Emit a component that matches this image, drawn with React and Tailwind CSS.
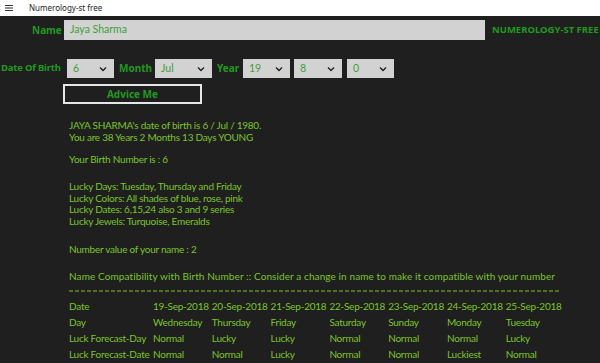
import React from "react";

function Chevron() {
  return (
    <svg width="8" height="6" viewBox="0 0 8 6" className="shrink-0">
      <polyline points="1,1.5 4,4.5 7,1.5" fill="none" stroke="#222" strokeWidth="1.4" />
    </svg>
  );
}

function Select({ value, w }) {
  return (
    <div className={`flex h-[19px] items-center justify-between bg-[#d2d2d2] pl-[6px] pr-[7px] font-['Lato',sans-serif] text-[10.5px] text-[#3c9f3c] ${w}`}>
      <span>{value}</span>
      <Chevron />
    </div>
  );
}

const dates = ["19-Sep-2018", "20-Sep-2018", "21-Sep-2018", "22-Sep-2018", "23-Sep-2018", "24-Sep-2018", "25-Sep-2018"];
const rows = [
  ["Date", ...dates],
  ["Day", "Wednesday", "Thursday", "Friday", "Saturday", "Sunday", "Monday", "Tuesday"],
  ["Luck Forecast-Day", "Normal", "Lucky", "Lucky", "Normal", "Normal", "Normal", "Lucky"],
  ["Luck Forecast-Date", "Normal", "Normal", "Lucky", "Normal", "Normal", "Luckiest", "Normal"],
];

export default function App() {
  return (
    <div className="h-[363px] w-[600px] overflow-hidden bg-[#1f1f1f] font-['Noto_Sans',sans-serif]">
      <div className="flex h-[16px] items-center bg-white">
        <svg width="8" height="6" viewBox="0 0 8 6" className="ml-[5px]">
          <rect x="0" y="0" width="8" height="1" fill="#333" />
          <rect x="0" y="2.5" width="8" height="1" fill="#333" />
          <rect x="0" y="5" width="8" height="1" fill="#333" />
        </svg>
        <span className="ml-[16px] text-[8px] text-[#222]">Numerology-st free</span>
      </div>

      <div className="mt-[4px] flex h-[20px] items-center">
        <span className="ml-[32px] w-[32px] text-[10px] font-bold text-[#1f9a1f]">Name</span>
        <div className="flex h-[20px] w-[421px] items-center bg-[#d2d2d2] pl-[6px] font-['Lato',sans-serif] text-[10.5px] text-[#3c9f3c]">Jaya Sharma</div>
        <span className="ml-[7px] whitespace-nowrap text-[9.5px] font-bold text-[#1f9a1f]">NUMEROLOGY-ST FREE</span>
      </div>

      <div className="mt-[19px] flex h-[19px] items-center">
        <span className="w-[67px] whitespace-nowrap pl-[1px] text-[9.5px] font-bold tracking-[-0.2px] text-[#1f9a1f]">Date Of Birth</span>
        <Select value="6" w="w-[47px]" />
        <span className="ml-[5px] w-[36px] text-[10px] font-bold text-[#1f9a1f]">Month</span>
        <Select value="Jul" w="w-[57px]" />
        <span className="ml-[5px] w-[26px] text-[10px] font-bold text-[#1f9a1f]">Year</span>
        <Select value="19" w="w-[47px]" />
        <div className="w-[4px]" />
        <Select value="8" w="w-[48px]" />
        <div className="w-[5px]" />
        <Select value="0" w="w-[47px]" />
      </div>

      <div className="ml-[63px] mt-[6px] flex h-[20px] w-[139px] items-center justify-center border-2 border-[#e6e6e6] text-[10px] font-bold text-[#1f9a1f]">
        Advice Me
      </div>

      <div className="ml-[69px] font-['Lato',sans-serif] text-[10px] leading-[11.5px] tracking-[-0.25px] text-[#7cc52a]">
        <div className="mt-[16px]">JAYA SHARMA's date of birth is 6 / Jul / 1980.</div>
        <div>You are 38 Years 2 Months 13 Days YOUNG</div>
        <div className="mt-[11px]">Your Birth Number is : 6</div>
        <div className="mt-[15.5px]">Lucky Days: Tuesday, Thursday and Friday</div>
        <div>Lucky Colors: All shades of blue, rose, pink</div>
        <div>Lucky Dates: 6,15,24 also 3 and 9 series</div>
        <div>Lucky Jewels: Turquoise, Emeralds</div>
        <div className="mt-[16.5px]">Number value of your name : 2</div>
        <div className="mt-[16px] whitespace-nowrap tracking-[0.1px]">Name Compatibility with Birth Number :: Consider a change in name to make it compatible with your number</div>
        <svg width="491" height="4" className="mt-[6px] block">
          <line x1="0" y1="2" x2="491" y2="2" stroke="#7cc52a" strokeWidth="1" strokeDasharray="4 2" />
        </svg>
        <div className="mt-[8px] grid grid-cols-[84px_repeat(7,58.8px)]">
          {rows.map((r, i) =>
            r.map((c, j) => (
              <div key={i + "-" + j} className="h-[16px] whitespace-nowrap">
                {c}
              </div>
            ))
          )}
        </div>
      </div>
    </div>
  );
}
